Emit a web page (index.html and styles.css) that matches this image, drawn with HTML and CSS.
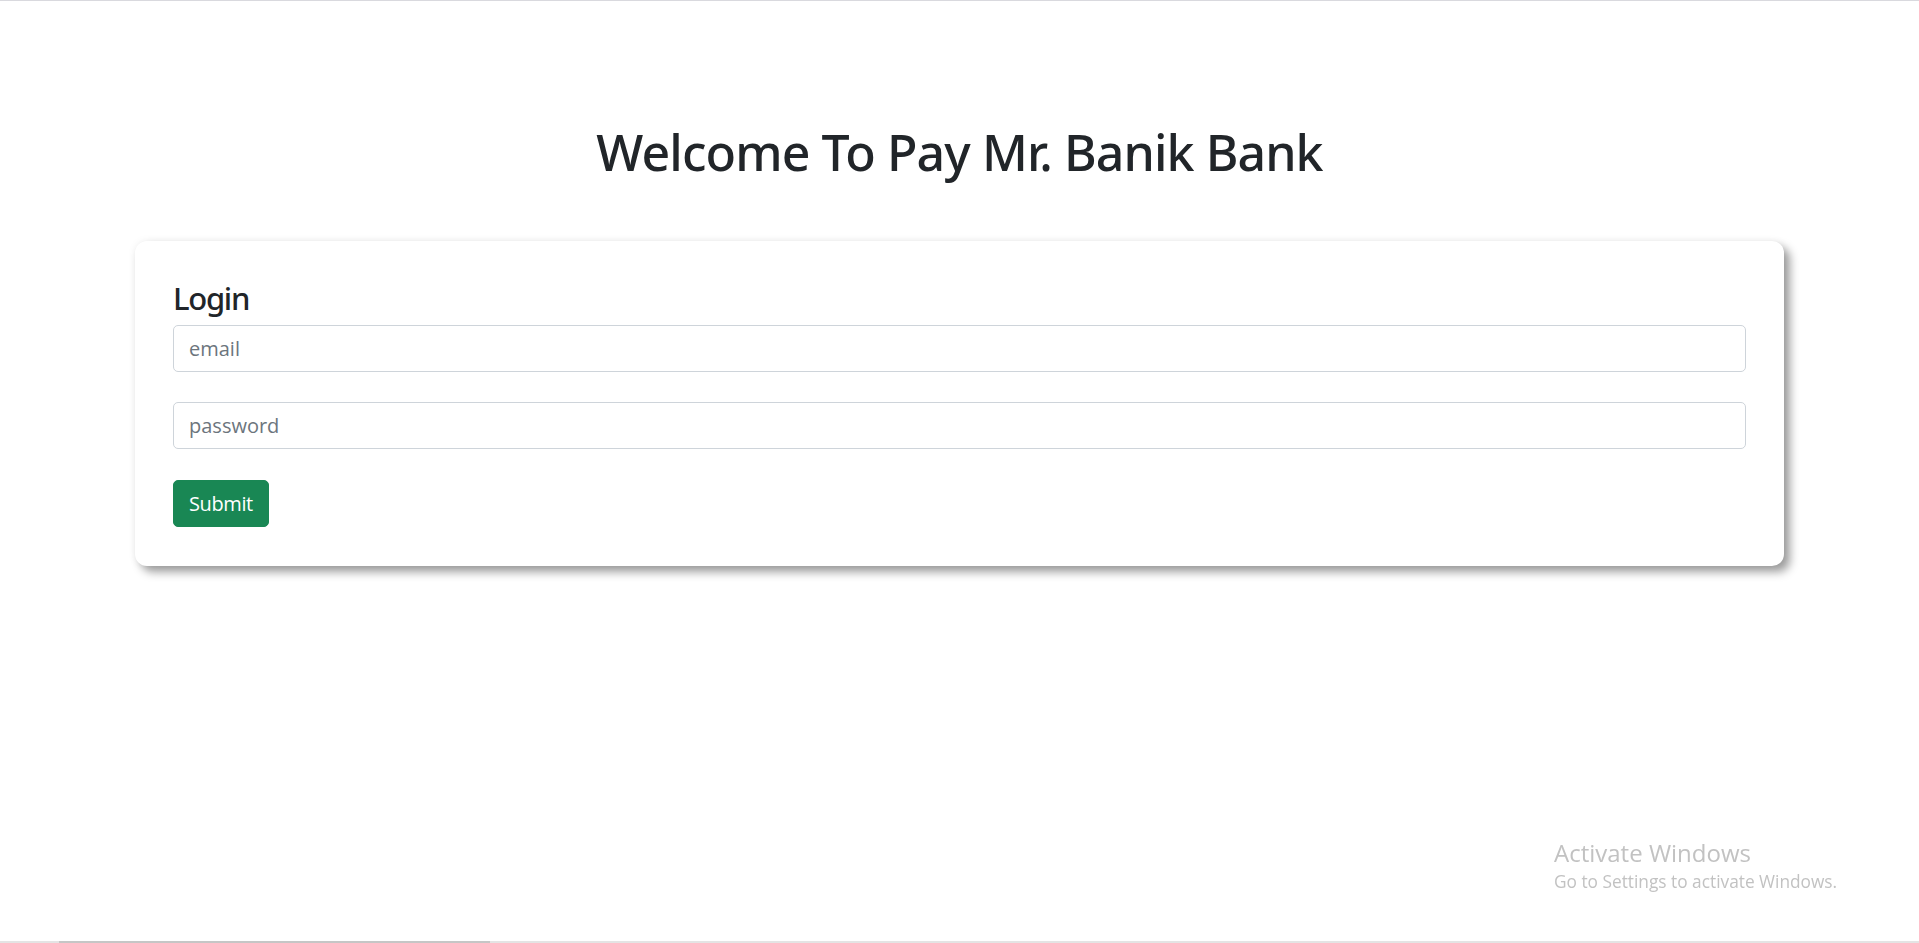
FILE: index.html
```html
<!DOCTYPE html>
<html lang="en">
<head>
<meta charset="utf-8">
<title>Pay Mr. Banik Bank</title>
<link rel="stylesheet" href="styles.css">
</head>
<body>
<main class="page">
  <h1 class="title">Welcome To Pay Mr. Banik Bank</h1>
  <section class="card">
    <h4 class="card-title">Login</h4>
    <form class="form">
      <input class="field" type="email" placeholder="email">
      <input class="field" type="password" placeholder="password">
      <button class="btn" type="button">Submit</button>
    </form>
  </section>
</main>
<div class="watermark">
  <div class="wm-title">Activate Windows</div>
  <div class="wm-sub">Go to Settings to activate Windows.</div>
</div>
<div class="hscroll"><div class="hscroll-thumb"></div></div>
</body>
</html>
```
FILE: styles.css
```css
html, body {
  height: 100%;
}
body {
  margin: 0;
  border-top: 1px solid #d9d9de;
  box-sizing: border-box;
  background: #ffffff;
  color: #212529;
  font-family: "Open Sans", "Noto Sans", sans-serif;
}
.page {
  padding: 121px 135px 0;
}
.title {
  margin: 0 0 59px;
  font-family: "Noto Sans", "Open Sans", sans-serif;
  font-size: 50px;
  font-weight: 500;
  letter-spacing: -0.9px;
  line-height: 60px;
  text-align: center;
}
.card {
  background: #ffffff;
  border-radius: 12px;
  padding: 38px 38px 39px;
  box-shadow: 6px 6px 10px rgba(0, 0, 0, 0.38), 0 0 8px rgba(0, 0, 0, 0.06);
}
.card-title {
  margin: 0 0 8px;
  font-family: "Noto Sans", "Open Sans", sans-serif;
  font-size: 31px;
  font-weight: 500;
  letter-spacing: -1.3px;
  line-height: 38px;
}
.form {
  display: flex;
  flex-direction: column;
  align-items: flex-start;
  gap: 30px;
}
.field {
  display: block;
  width: 100%;
  box-sizing: border-box;
  height: 47px;
  padding: 7.5px 15px;
  border: 1px solid #ced4da;
  border-radius: 5px;
  background: #fff;
  color: #212529;
  font-family: "Open Sans", "Noto Sans", sans-serif;
  font-size: 20px;
  line-height: 30px;
  outline: none;
}
.field::placeholder {
  color: #6c757d;
  opacity: 1;
}
.btn {
  margin-top: 1px;
  height: 47px;
  box-sizing: border-box;
  padding: 7.5px 15px;
  border: 1px solid #198754;
  border-radius: 5px;
  background: #198754;
  color: #ffffff;
  font-family: "Open Sans", "Noto Sans", sans-serif;
  font-size: 20px;
  letter-spacing: -0.4px;
  line-height: 30px;
  cursor: pointer;
}
.watermark {
  position: fixed;
  left: 1554px;
  top: 838px;
  color: #c2c2c2;
  font-family: "Open Sans", "Noto Sans", sans-serif;
  pointer-events: none;
}
.wm-title {
  font-size: 24px;
  line-height: 30px;
}
.wm-sub {
  margin-top: 2px;
  font-size: 17.3px;
  line-height: 24px;
}
.hscroll {
  position: fixed;
  left: 0;
  right: 0;
  bottom: 0;
  height: 2px;
  background: #e4e4e4;
}
.hscroll-thumb {
  margin-left: 59px;
  width: 431px;
  height: 2px;
  background: #c6c6c6;
}
```
